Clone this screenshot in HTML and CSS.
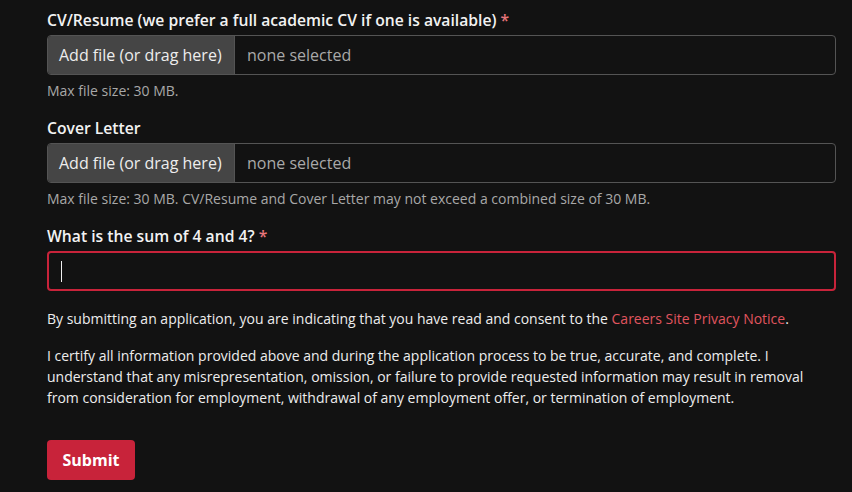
FILE: index.html
```html
<!DOCTYPE html>
<html lang="en">
<head>
<meta charset="utf-8">
<title>Application</title>
<link rel="stylesheet" href="styles.css">
</head>
<body>
<form class="form">
  <div class="field">
    <label class="label">CV/Resume (we prefer a full academic CV if one is available) <span class="req">*</span></label>
    <div class="file">
      <span class="file-btn">Add file (or drag here)</span>
      <span class="file-name">none selected</span>
    </div>
    <p class="hint">Max file size: 30 MB.</p>
  </div>
  <div class="field">
    <label class="label">Cover Letter</label>
    <div class="file">
      <span class="file-btn">Add file (or drag here)</span>
      <span class="file-name">none selected</span>
    </div>
    <p class="hint">Max file size: 30 MB. CV/Resume and Cover Letter may not exceed a combined size of 30 MB.</p>
  </div>
  <div class="field field-last">
    <label class="label">What is the sum of 4 and 4? <span class="req">*</span></label>
    <div class="text-input"><span class="caret"></span></div>
  </div>
  <p class="note">By submitting an application, you are indicating that you have read and consent to the <a class="link" href="#">Careers Site Privacy Notice</a>.</p>
  <p class="note">I certify all information provided above and during the application process to be true, accurate, and complete. I understand that any misrepresentation, omission, or failure to provide requested information may result in removal from consideration for employment, withdrawal of any employment offer, or termination of employment.</p>
  <button class="submit" type="button">Submit</button>
</form>
</body>
</html>
```

FILE: styles.css
```css
html, body {
  margin: 0;
  padding: 0;
  background: #121212;
}
body {
  font-family: "Open Sans", "Noto Sans", sans-serif;
  color: #ececec;
}
.form {
  width: 789px;
  padding: 8px 0 0 47px;
}
.field {
  margin-bottom: 15px;
}
.field-last {
  margin-bottom: 17px;
}
.label {
  display: block;
  font-size: 15.7px;
  line-height: 24px;
  font-weight: 600;
  color: #f2f2f2;
  margin-bottom: 3px;
}
.req {
  color: #e8757a;
}
.file {
  display: flex;
  height: 40px;
  box-sizing: border-box;
  border: 1px solid #545454;
  border-radius: 4px;
  overflow: hidden;
  font-size: 16px;
}
.file-btn {
  display: flex;
  align-items: center;
  padding: 0 12px 0 11px;
  width: 163px;
  background: #454545;
  color: #ededed;
  border-right: 1px solid #545454;
}
.file-name {
  display: flex;
  align-items: center;
  padding-left: 12px;
  color: #a9a9a9;
}
.hint {
  margin: 5px 0 0;
  font-size: 14px;
  line-height: 21px;
  color: #a8a8a8;
}
.text-input {
  height: 40px;
  box-sizing: border-box;
  border: 2px solid #c8233a;
  border-radius: 4px;
  display: flex;
  align-items: center;
  padding-left: 12px;
}
.caret {
  width: 1px;
  height: 21px;
  background: #f0f0f0;
}
.note {
  margin: 0 0 16px;
  font-size: 14px;
  line-height: 21px;
  color: #ededed;
}
.link {
  color: #e0555f;
  text-decoration: none;
}
.submit {
  margin-top: 16px;
  height: 40px;
  width: 88px;
  border: none;
  border-radius: 4px;
  background: #c8233a;
  color: #ffffff;
  font-family: "Open Sans", "Noto Sans", sans-serif;
  font-size: 16px;
  font-weight: 700;
  padding: 0;
}
```
